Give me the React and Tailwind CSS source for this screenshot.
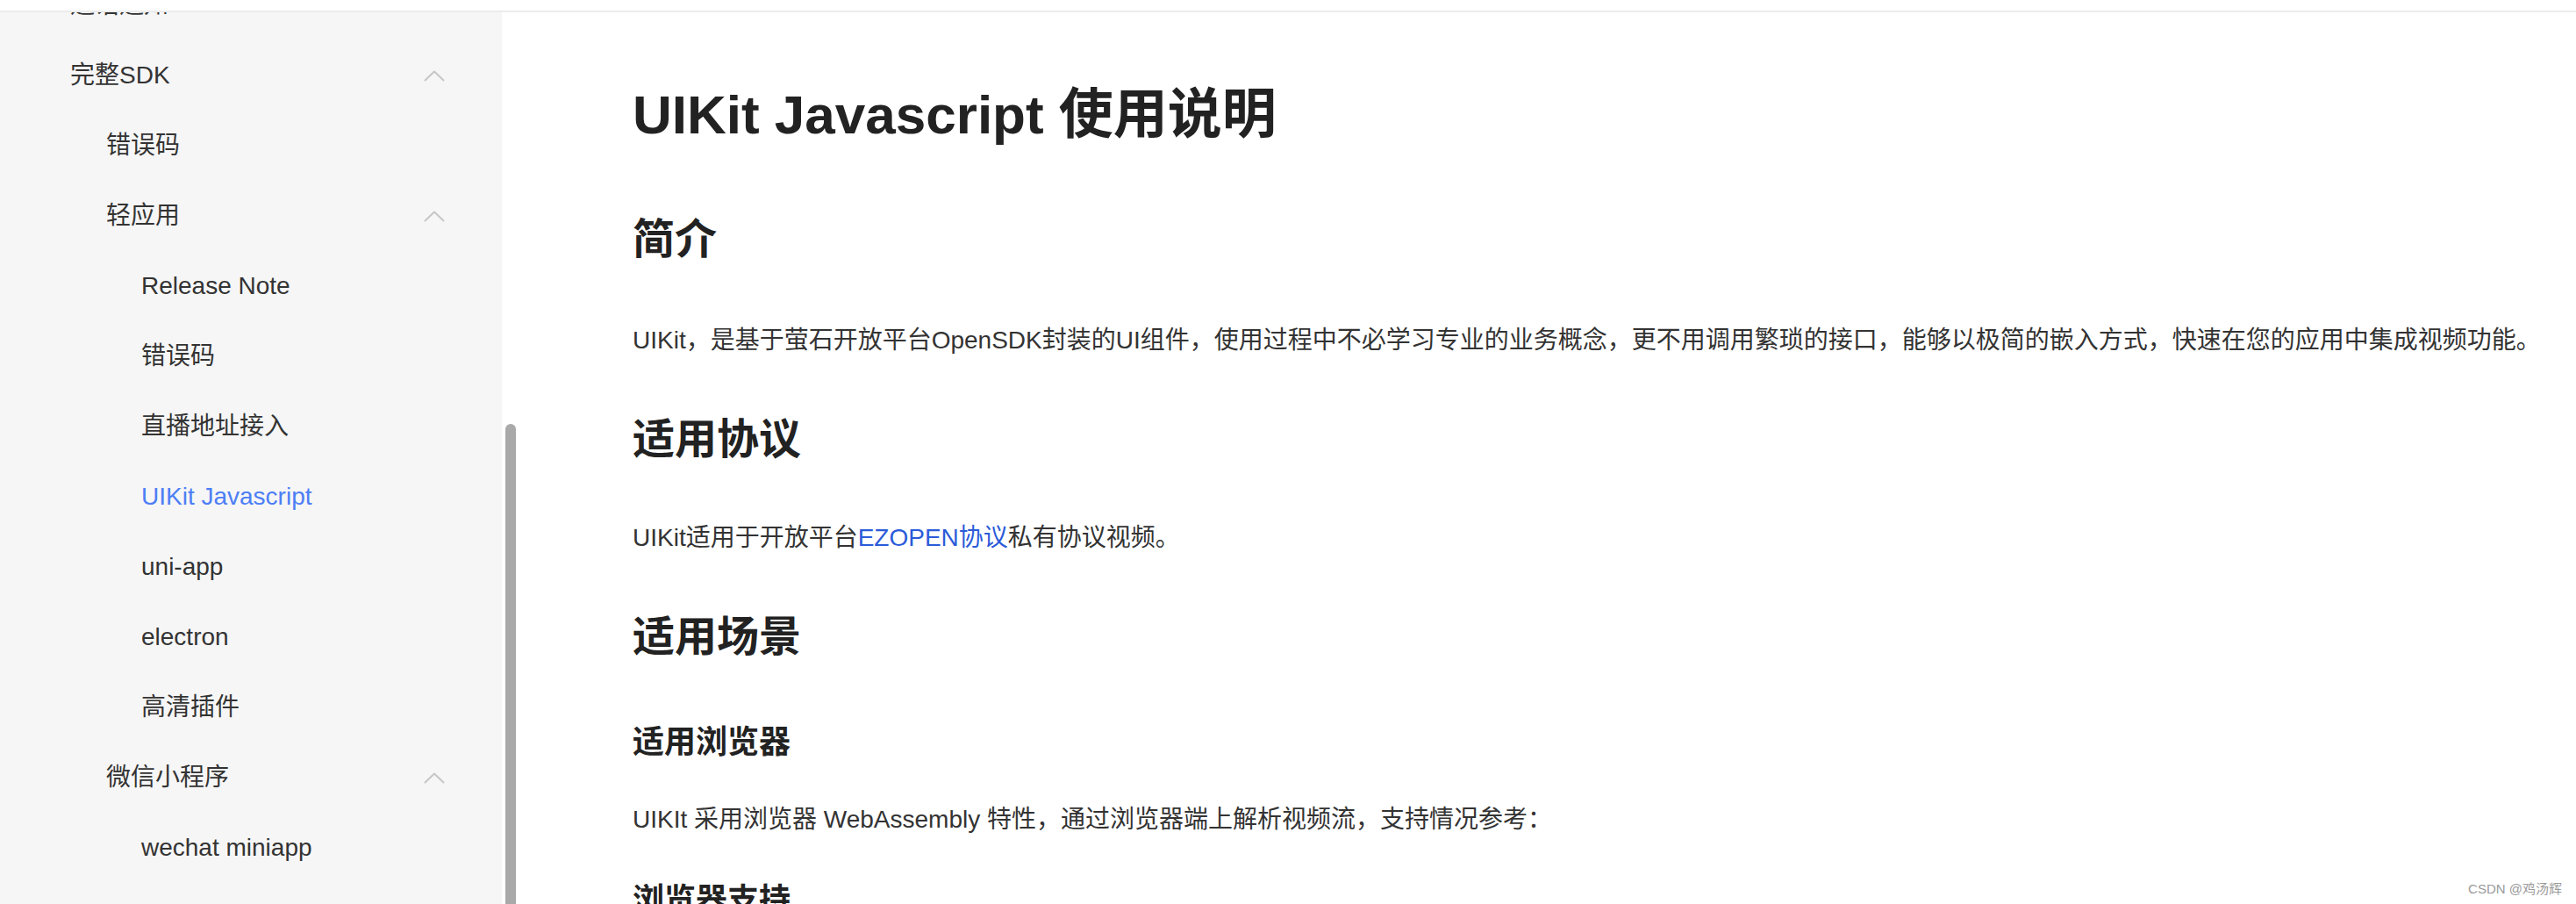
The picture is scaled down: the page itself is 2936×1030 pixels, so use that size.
import React from 'react';

const FONT = { fontFamily: '"Liberation Sans", "Noto Sans CJK SC", sans-serif' };

// sidebar rows; level sets the indent, open rows get a chevron
const NAV = [
  { label: '通话通知', level: 1 },
  { label: '完整SDK', level: 1, open: true },
  { label: '错误码', level: 2 },
  { label: '轻应用', level: 2, open: true },
  { label: 'Release Note', level: 3 },
  { label: '错误码', level: 3 },
  { label: '直播地址接入', level: 3 },
  { label: 'UIKit Javascript', level: 3, active: true },
  { label: 'uni-app', level: 3 },
  { label: 'electron', level: 3 },
  { label: '高清插件', level: 3 },
  { label: '微信小程序', level: 2, open: true },
  { label: 'wechat miniapp', level: 3 },
];

const INDENT = { 1: 'pl-[80px]', 2: 'pl-[121px]', 3: 'pl-[161px]' };

function ChevronUp() {
  return (
    <svg width="24" height="13" viewBox="0 0 24 13" fill="none">
      <polyline points="1.5,11.5 12,1.5 22.5,11.5" stroke="#c6c6c6" strokeWidth="2" strokeLinecap="round" strokeLinejoin="round" />
    </svg>
  );
}

function NavRow({ item }) {
  return (
    <div className={`flex h-[80px] items-center justify-between pr-[65px] ${INDENT[item.level]}`}>
      <span className={`text-[28px] leading-none ${item.active ? 'text-[#4d7ef5]' : 'text-[#333333]'}`}>{item.label}</span>
      {item.open && <ChevronUp />}
    </div>
  );
}

function Sidebar() {
  return (
    <aside className="w-[572px] shrink-0 overflow-hidden bg-[#f6f6f6]">
      <div className="mt-[-48px]">
        {NAV.map((item, i) => (
          <NavRow key={i} item={item} />
        ))}
      </div>
    </aside>
  );
}

function Content() {
  return (
    <main className="min-w-0 flex-1 pl-[133px] pt-[72px] text-[#333333]">
      <h1 className="text-[62px] font-bold leading-[90px] text-[#222222]">UIKit Javascript 使用说明</h1>

      <h2 className="mt-[65px] text-[48px] font-bold leading-[64px] text-[#222222]">简介</h2>
      <p className="mt-[59px] whitespace-nowrap text-[28px] leading-[48px]">
        UIKit，是基于萤石开放平台OpenSDK封装的UI组件，使用过程中不必学习专业的业务概念，更不用调用繁琐的接口，能够以极简的嵌入方式，快速在您的应用中集成视频功能。
      </p>

      <h2 className="mt-[57px] text-[48px] font-bold leading-[64px] text-[#222222]">适用协议</h2>
      <p className="mt-[56px] text-[28px] leading-[48px]">
        UIKit适用于开放平台<span className="text-[#2b5bd9]">EZOPEN协议</span>私有协议视频。
      </p>

      <h2 className="mt-[57px] text-[48px] font-bold leading-[64px] text-[#222222]">适用场景</h2>
      <h3 className="mt-[62px] text-[36px] font-bold leading-[52px] text-[#222222]">适用浏览器</h3>
      <p className="mt-[38px] text-[28px] leading-[48px]">
        UIKIt 采用浏览器 WebAssembly 特性，通过浏览器端上解析视频流，支持情况参考：
      </p>
      <h4 className="mt-[42px] text-[36px] font-bold leading-[52px] text-[#222222]">浏览器支持</h4>
    </main>
  );
}

export default function App() {
  return (
    <div className="relative flex h-[1030px] w-[2936px] flex-col overflow-hidden bg-white" style={FONT}>
      <header className="h-[14px] shrink-0 border-b-2 border-[#ececec] bg-white" />
      <div className="flex min-h-0 flex-1">
        <Sidebar />
        {/* sidebar scroll thumb */}
        <div className="ml-[4px] w-[12px] shrink-0 pt-[469px]">
          <div className="h-full rounded-t-full bg-[#a9a9a9]" />
        </div>
        <Content />
      </div>
      <span className="absolute bottom-[8px] right-[16px] text-[15px] leading-[18px] text-[#9a9a9a]">CSDN @鸡汤辉</span>
    </div>
  );
}
